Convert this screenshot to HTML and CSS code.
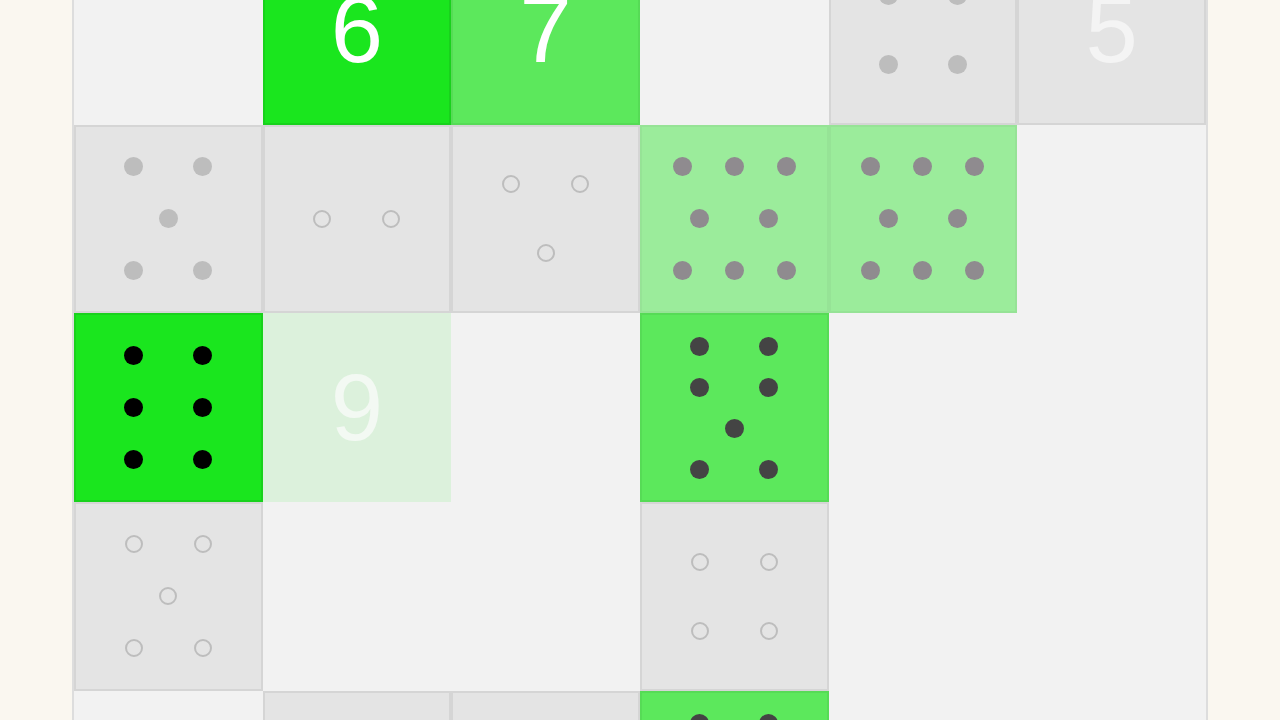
FILE: index.html
```html
<!DOCTYPE html>
<html lang="en">
<head>
<meta charset="utf-8">
<title>Dice board</title>
<link rel="stylesheet" href="styles.css">
</head>
<body>
<main class="board">
  <!-- row 0 -->
  <div class="cell"></div>
  <div class="cell green"><span class="num">6</span></div>
  <div class="cell mid"><span class="num">7</span></div>
  <div class="cell"></div>
  <div class="cell grey"><div class="face g50"><div class="row"><i class="dot fg"></i><i class="dot fg"></i></div><div class="row"><i class="dot fg"></i><i class="dot fg"></i></div></div></div>
  <div class="cell grey"><span class="num dim">5</span></div>
  <!-- row 1 -->
  <div class="cell grey"><div class="face g33"><div class="row"><i class="dot fg"></i><i class="dot fg"></i></div><div class="row"><i class="dot fg"></i></div><div class="row"><i class="dot fg"></i><i class="dot fg"></i></div></div></div>
  <div class="cell grey"><div class="face"><div class="row"><i class="dot ho"></i><i class="dot ho"></i></div></div></div>
  <div class="cell grey"><div class="face g50"><div class="row"><i class="dot ho"></i><i class="dot ho"></i></div><div class="row"><i class="dot ho"></i></div></div></div>
  <div class="cell light"><div class="face g33"><div class="row tight"><i class="dot fd"></i><i class="dot fd"></i><i class="dot fd"></i></div><div class="row"><i class="dot fd"></i><i class="dot fd"></i></div><div class="row tight"><i class="dot fd"></i><i class="dot fd"></i><i class="dot fd"></i></div></div></div>
  <div class="cell light"><div class="face g33"><div class="row tight"><i class="dot fd"></i><i class="dot fd"></i><i class="dot fd"></i></div><div class="row"><i class="dot fd"></i><i class="dot fd"></i></div><div class="row tight"><i class="dot fd"></i><i class="dot fd"></i><i class="dot fd"></i></div></div></div>
  <div class="cell"></div>
  <!-- row 2 -->
  <div class="cell green"><div class="face g33"><div class="row"><i class="dot fb"></i><i class="dot fb"></i></div><div class="row"><i class="dot fb"></i><i class="dot fb"></i></div><div class="row"><i class="dot fb"></i><i class="dot fb"></i></div></div></div>
  <div class="cell pale"><span class="num faint">9</span></div>
  <div class="cell"></div>
  <div class="cell mid"><div class="face g22"><div class="row"><i class="dot fk"></i><i class="dot fk"></i></div><div class="row"><i class="dot fk"></i><i class="dot fk"></i></div><div class="row"><i class="dot fk"></i></div><div class="row"><i class="dot fk"></i><i class="dot fk"></i></div></div></div>
  <div class="cell"></div>
  <div class="cell"></div>
  <!-- row 3 -->
  <div class="cell grey"><div class="face g33"><div class="row"><i class="dot ho"></i><i class="dot ho"></i></div><div class="row"><i class="dot ho"></i></div><div class="row"><i class="dot ho"></i><i class="dot ho"></i></div></div></div>
  <div class="cell"></div>
  <div class="cell"></div>
  <div class="cell grey"><div class="face g50"><div class="row"><i class="dot ho"></i><i class="dot ho"></i></div><div class="row"><i class="dot ho"></i><i class="dot ho"></i></div></div></div>
  <div class="cell"></div>
  <div class="cell"></div>
  <!-- row 4 -->
  <div class="cell"></div>
  <div class="cell grey"></div>
  <div class="cell grey"></div>
  <div class="cell mid"><div class="face g22"><div class="row"><i class="dot fk"></i><i class="dot fk"></i></div><div class="row"><i class="dot fk"></i><i class="dot fk"></i></div><div class="row"><i class="dot fk"></i></div><div class="row"><i class="dot fk"></i><i class="dot fk"></i></div></div></div>
  <div class="cell"></div>
  <div class="cell"></div>
</main>
</body>
</html>
```

FILE: styles.css
```css
html, body {
  margin: 0;
  padding: 0;
}

body {
  background: #faf7f0;
  font-family: "Liberation Sans", Arial, sans-serif;
  overflow: hidden;
  height: 720px;
}

.board {
  box-sizing: content-box;
  width: 1132px;
  margin: -66px auto 0;
  border: 2px solid #dddddd;
  background: #f2f2f2;
  display: grid;
  grid-template-columns: repeat(6, 1fr);
  grid-auto-rows: 188.67px;
}

.cell {
  box-sizing: border-box;
  display: flex;
  align-items: center;
  justify-content: center;
  border: 2px solid transparent;
}

.grey {
  background: #e4e4e4;
  border-color: #d5d5d5;
}

.green {
  background: #1ae61e;
  border-color: #18d21c;
}

.mid {
  background: #5ce85c;
  border-color: #56db56;
}

.light {
  background: #9bec9b;
  border-color: #96e396;
}

.pale {
  background: #dcf1dc;
  border-color: #dcf1dc;
}

.num {
  font-size: 94px;
  line-height: 1;
  color: #ffffff;
}

.num.dim {
  color: #f4f4f4;
}

.num.faint {
  color: #f3f9f3;
}

.face {
  display: flex;
  flex-direction: column;
  align-items: center;
  justify-content: center;
}

.face.g50 { gap: 50px; }
.face.g33 { gap: 33px; }
.face.g22 { gap: 22px; }

.row {
  display: flex;
  gap: 50px;
}

.row.tight {
  gap: 33px;
}

.dot {
  display: block;
  box-sizing: border-box;
  width: 19px;
  height: 19px;
  border-radius: 50%;
}

.fg { background: #bdbdbd; }
.fd { background: #8f8b8f; }
.fb { background: #000000; }
.fk { background: #444444; }

.ho {
  width: 18px;
  height: 18px;
  border: 2px solid #bdbdbd;
  background: transparent;
  margin: 0.5px;
}
```
